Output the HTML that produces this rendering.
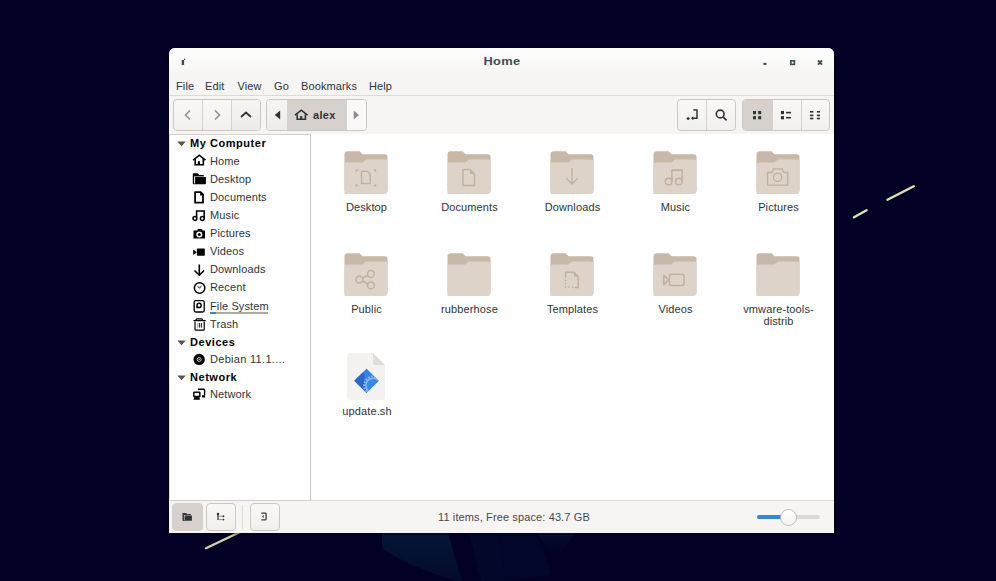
<!DOCTYPE html>
<html><head><meta charset="utf-8">
<style>
*{box-sizing:border-box;margin:0;padding:0}
html,body{width:996px;height:581px;overflow:hidden;background:#020024;font-family:"Liberation Sans",sans-serif;position:relative}
.a{position:absolute;display:block}
.t{position:absolute;font-size:11px;line-height:12px;white-space:nowrap;color:#2e3436;letter-spacing:0.12px}
.grp{position:absolute;border:1px solid #cdc7c2;border-radius:4px;background:linear-gradient(#f9f8f7,#f2f0ef);overflow:hidden}
.dv{position:absolute;top:0;bottom:0;width:1px;background:#d6d1cc}
.act{position:absolute;top:0;bottom:0;background:#d6d1cd}
</style></head><body>

<svg class="a" style="left:0;top:0" width="996" height="581">
  <defs>
   <linearGradient id="g1" x1="0" y1="0" x2="0" y2="1"><stop offset="0" stop-color="#072546"/><stop offset="1" stop-color="#03102f"/></linearGradient>
   <linearGradient id="g2" x1="0" y1="0" x2="0" y2="1"><stop offset="0" stop-color="#061a3a"/><stop offset="1" stop-color="#020024" stop-opacity="0"/></linearGradient>
  </defs>
  <path d="M382 533 H448 L462 581 H456 Q405 565 382 548 Z" fill="url(#g1)" opacity="0.6"/>
  <path d="M469 533 H497 L506 581 H481 Z" fill="#041236" opacity="0.45"/>
  <path d="M497 533 H537 L552 575 L506 581 Z" fill="#03113a" opacity="0.35"/>
  <path d="M537 533 H575 L555 560 Z" fill="url(#g2)" opacity="0.7"/>
  <line x1="854" y1="217.3" x2="866.6" y2="210.2" stroke="#e2e0b0" stroke-width="2.4" stroke-linecap="round"/>
  <line x1="887.5" y1="199.8" x2="913.8" y2="186.2" stroke="#e2e0b0" stroke-width="2.4" stroke-linecap="round"/>
  <line x1="206" y1="548.3" x2="240" y2="532" stroke="#d4d2a4" stroke-width="2.3" stroke-linecap="round"/>
</svg>
<div class="a" style="left:169px;top:48px;width:665px;height:485px;background:#f6f5f4;border-radius:6px 6px 0 0;box-shadow:0 1px 3px rgba(0,0,0,0.6)"></div>
<div class="a" style="left:169px;top:48px;width:665px;height:25px;border-radius:6px 6px 0 0;background:linear-gradient(#fdfdfd,#f8f8f7 80%,#f6f5f4)"></div>
<svg class="a" style="left:180px;top:57px;" width="8" height="9" viewBox="0 0 8 9"><rect x="1.7" y="3" width="2.4" height="5" fill="#3b4d55"/><circle cx="4.6" cy="2.3" r="0.8" fill="#3b4d55"/></svg>
<div class="t" style="left:462px;top:55px;width:80px;text-align:center;font-weight:bold;font-size:11.3px;color:#3d4b53;letter-spacing:0.3px;transform:scaleX(1.14)">Home</div>
<svg class="a" style="left:760px;top:57px;" width="66" height="10" viewBox="0 0 66 10"><rect x="3.4" y="5.9" width="3.1" height="2" fill="#3b4d55"/><rect x="30.8" y="3.8" width="3.6" height="3.6" fill="none" stroke="#3b4d55" stroke-width="1.6"/><path d="M58 3.4 L62 7.6 M62 3.4 L58 7.6" stroke="#3b4d55" stroke-width="1.9"/></svg>
<div class="t" style="left:176px;top:79.5px;font-weight:normal;font-size:11px;color:#2e3436;">File</div>
<div class="t" style="left:205px;top:79.5px;font-weight:normal;font-size:11px;color:#2e3436;">Edit</div>
<div class="t" style="left:237.5px;top:79.5px;font-weight:normal;font-size:11px;color:#2e3436;">View</div>
<div class="t" style="left:274px;top:79.5px;font-weight:normal;font-size:11px;color:#2e3436;">Go</div>
<div class="t" style="left:301px;top:79.5px;font-weight:normal;font-size:11px;color:#2e3436;">Bookmarks</div>
<div class="t" style="left:369px;top:79.5px;font-weight:normal;font-size:11px;color:#2e3436;">Help</div>
<div class="a" style="left:169px;top:95px;width:665px;height:1px;background:#dedad6"></div>
<div class="grp" style="left:173px;top:99px;width:88px;height:32px;"><div class="dv" style="left:28px"></div><div class="dv" style="left:57px"></div><div class="a" style="left:58px;top:0;width:29px;height:30px;background:linear-gradient(#f6f5f4,#edebe9)"></div></div>
<svg class="a" style="left:182px;top:108px;" width="12" height="14" viewBox="0 0 12 14"><path d="M8 2.5 L3.5 7 L8 11.5" fill="none" stroke="#8b8e8f" stroke-width="1.5"/></svg>
<svg class="a" style="left:211px;top:108px;" width="12" height="14" viewBox="0 0 12 14"><path d="M4 2.5 L8.5 7 L4 11.5" fill="none" stroke="#8b8e8f" stroke-width="1.5"/></svg>
<svg class="a" style="left:239px;top:108px;" width="14" height="12" viewBox="0 0 14 12"><path d="M2 9 L7 4.5 L12 9" fill="none" stroke="#2e3436" stroke-width="1.7"/></svg>
<div class="grp" style="left:266px;top:99px;width:101px;height:32px;"><div class="a" style="left:0;top:0;width:20px;height:30px;background:linear-gradient(#f6f5f4,#eeecea)"></div><div class="act" style="left:20px;width:60px"></div><div class="a" style="left:80px;top:0;width:19px;height:30px;background:#faf9f8"></div></div>
<svg class="a" style="left:272px;top:108px;" width="10" height="14" viewBox="0 0 10 14"><path d="M8.2 2.4 L2.8 7 L8.2 11.6 Z" fill="#2e3436"/></svg>
<svg class="a" style="left:352px;top:108px;" width="10" height="14" viewBox="0 0 10 14"><path d="M1.7 2.4 L7 7 L1.7 11.6 Z" fill="#8b8e8f"/></svg>
<svg class="a" style="left:293px;top:108px;" width="16" height="13" viewBox="0 0 16 13"><path d="M2 7.1 L8.3 2.2 L14.6 7.1" fill="none" stroke="#2e3436" stroke-width="1.6" stroke-linejoin="miter"/><path d="M4.2 6.2 V11.2 H12.4 V6.2" fill="none" stroke="#2e3436" stroke-width="1.6"/><rect x="7.1" y="8.1" width="2.2" height="3.3" fill="#2e3436"/></svg>
<div class="t" style="left:313px;top:109px;font-weight:bold;font-size:11px;color:#2e3436;letter-spacing:0.3px">alex</div>
<div class="grp" style="left:677px;top:99px;width:59px;height:32px;"><div class="dv" style="left:28px"></div></div>
<svg class="a" style="left:684px;top:107px;" width="16" height="16" viewBox="0 0 16 16"><circle cx="4.1" cy="11.6" r="1.45" fill="#2e3436"/><path d="M9.3 3 H13 V11.3 H8.5" fill="none" stroke="#2e3436" stroke-width="1.5"/><path d="M6.8 11.3 L9.3 9.3 V13.3 Z" fill="#2e3436"/></svg>
<svg class="a" style="left:713px;top:107px;" width="16" height="16" viewBox="0 0 16 16"><circle cx="7.2" cy="7" r="3.9" fill="none" stroke="#2e3436" stroke-width="1.6"/><path d="M10 9.8 L13.6 13.3" stroke="#2e3436" stroke-width="1.7"/></svg>
<div class="grp" style="left:742px;top:99px;width:88px;height:32px;"><div class="act" style="left:0;width:29px"></div><div class="dv" style="left:29px"></div><div class="dv" style="left:58px"></div></div>
<svg class="a" style="left:750px;top:107px;" width="16" height="16" viewBox="0 0 16 16"><g fill="#2e3436"><rect x="3" y="4" width="3" height="3.2"/><rect x="8.2" y="4" width="3" height="3.2"/><rect x="3" y="9.1" width="3" height="3.2"/><rect x="8.2" y="9.1" width="3" height="3.2"/></g></svg>
<svg class="a" style="left:778px;top:107px;" width="16" height="16" viewBox="0 0 16 16"><g fill="#2e3436"><rect x="2.9" y="4" width="3.1" height="3.2"/><rect x="2.9" y="9.1" width="3.1" height="3.2"/><rect x="8" y="4.8" width="5" height="1.6"/><rect x="8" y="9.9" width="5" height="1.6"/></g></svg>
<svg class="a" style="left:807px;top:107px;" width="16" height="16" viewBox="0 0 16 16"><g fill="#2e3436"><rect x="2.9" y="4" width="3.5" height="1.6"/><rect x="9.9" y="4" width="3.1" height="1.6"/><rect x="2.9" y="7.6" width="3.5" height="1.6"/><rect x="9.9" y="7.6" width="3.1" height="1.6"/><rect x="2.9" y="10.7" width="3.5" height="1.6"/><rect x="9.9" y="10.7" width="3.1" height="1.6"/></g></svg>
<div class="a" style="left:169px;top:134px;width:142px;height:367px;background:#fff;border-left:1px solid #e2ddd9;border-top:1px solid #d5d0cc;border-right:1px solid #c9c3bd;border-bottom:1px solid #d5d0cc"></div>
<div class="a" style="left:311px;top:134px;width:523px;height:367px;background:#fff;border-bottom:1px solid #dedad6"></div>
<svg class="a" style="left:176.5px;top:140.5px;" width="10" height="6" viewBox="0 0 10 6"><path d="M0.3 0.6 H8.8 L4.55 5.3 Z" fill="#555753"/></svg>
<div class="t" style="left:190px;top:136.5px;font-weight:bold;font-size:11px;color:#000;letter-spacing:0.55px">My Computer</div>
<svg class="a" style="left:176.5px;top:339.5px;" width="10" height="6" viewBox="0 0 10 6"><path d="M0.3 0.6 H8.8 L4.55 5.3 Z" fill="#555753"/></svg>
<div class="t" style="left:190px;top:335.5px;font-weight:bold;font-size:11px;color:#000;letter-spacing:0.55px">Devices</div>
<svg class="a" style="left:176.5px;top:374.5px;" width="10" height="6" viewBox="0 0 10 6"><path d="M0.3 0.6 H8.8 L4.55 5.3 Z" fill="#555753"/></svg>
<div class="t" style="left:190px;top:370.5px;font-weight:bold;font-size:11px;color:#000;letter-spacing:0.55px">Network</div>
<div class="t" style="left:210px;top:154.5px;font-weight:normal;font-size:11px;color:#2e3436;">Home</div>
<div class="t" style="left:210px;top:172.5px;font-weight:normal;font-size:11px;color:#2e3436;">Desktop</div>
<div class="t" style="left:210px;top:190.5px;font-weight:normal;font-size:11px;color:#2e3436;">Documents</div>
<div class="t" style="left:210px;top:208.5px;font-weight:normal;font-size:11px;color:#2e3436;">Music</div>
<div class="t" style="left:210px;top:226.5px;font-weight:normal;font-size:11px;color:#2e3436;">Pictures</div>
<div class="t" style="left:210px;top:245px;font-weight:normal;font-size:11px;color:#2e3436;">Videos</div>
<div class="t" style="left:210px;top:263px;font-weight:normal;font-size:11px;color:#2e3436;">Downloads</div>
<div class="t" style="left:210px;top:281px;font-weight:normal;font-size:11px;color:#2e3436;">Recent</div>
<div class="t" style="left:210px;top:299.5px;font-weight:normal;font-size:11px;color:#2e3436;">File System</div>
<div class="t" style="left:210px;top:317.5px;font-weight:normal;font-size:11px;color:#2e3436;">Trash</div>
<div class="t" style="left:210px;top:353px;font-weight:normal;font-size:11px;color:#2e3436;letter-spacing:0.3px">Debian 11.1....</div>
<div class="t" style="left:210px;top:387.5px;font-weight:normal;font-size:11px;color:#2e3436;">Network</div>
<div class="a" style="left:210px;top:312px;width:58px;height:2px;background:#b0a9a2"></div>
<div class="a" style="left:210px;top:312px;width:6px;height:2px;background:#3584e4"></div>
<svg class="a" style="left:191px;top:152px;" width="16" height="16" viewBox="0 0 16 16"><path d="M2.2 8.1 L8.3 3.2 L14.4 8.1" fill="none" stroke="#000" stroke-width="1.6"/><path d="M4.2 6.8 V12.7 H12.3 V6.8" fill="none" stroke="#000" stroke-width="1.6"/><path d="M6.8 13 V10 Q6.8 9.1 7.9 9.1 Q9 9.1 9 10 V13 Z" fill="#000"/></svg>
<svg class="a" style="left:191px;top:170px;" width="16" height="16" viewBox="0 0 16 16"><path d="M1.8 3.9 Q1.8 3.2 2.5 3.2 H6.6 L8.4 5.1 H12.7 V6.2 H3.1 V14.3 H2.5 Q1.8 14.3 1.8 13.6 Z" fill="#000"/><path d="M4.1 7.1 H14.9 V13.6 Q14.9 14.3 14.2 14.3 H3 V13.4 H4.1 Z" fill="#000"/><path d="M3.3 6.6 H12.7" stroke="#777" stroke-width="0.8"/></svg>
<svg class="a" style="left:191px;top:189px;" width="16" height="16" viewBox="0 0 16 16"><path d="M4.1 3.2 H9.7 L12 5.5 V13.7 H4.1 Z" fill="none" stroke="#000" stroke-width="1.8" stroke-linejoin="round"/><path d="M9.1 3 V6.6 H12.2 Z" fill="#000"/></svg>
<svg class="a" style="left:191px;top:208px;" width="16" height="16" viewBox="0 0 16 16"><path d="M5.6 10.2 V3 H13.2 V10.2" fill="none" stroke="#000" stroke-width="1.5"/><circle cx="3.9" cy="10.5" r="1.9" fill="none" stroke="#000" stroke-width="1.5"/><circle cx="11.3" cy="10.5" r="1.9" fill="none" stroke="#000" stroke-width="1.5"/></svg>
<svg class="a" style="left:191px;top:226px;" width="16" height="16" viewBox="0 0 16 16"><path d="M2.5 4.4 H6.2 L7 2.9 H10.8 L11.6 4.4 H14 V12.6 H2.5 Z" fill="#000"/><circle cx="8.3" cy="8.4" r="3" fill="#fff"/><circle cx="8.3" cy="8.4" r="1.5" fill="#000"/></svg>
<svg class="a" style="left:191px;top:242px;" width="16" height="16" viewBox="0 0 16 16"><path d="M2.2 7.4 L5.8 10.15 L2.2 12.9 Z" fill="#000"/><rect x="5.9" y="6.6" width="7.9" height="7.2" rx="0.8" fill="#000"/></svg>
<svg class="a" style="left:191px;top:262px;" width="16" height="16" viewBox="0 0 16 16"><path d="M8.3 2.5 V13" stroke="#000" stroke-width="1.6"/><path d="M3.5 8.5 L8.3 13.2 L13.1 8.5" fill="none" stroke="#000" stroke-width="1.6"/></svg>
<svg class="a" style="left:191px;top:280px;" width="16" height="16" viewBox="0 0 16 16"><circle cx="8.6" cy="8" r="5.25" fill="none" stroke="#000" stroke-width="1.5"/><path d="M6.5 6.4 L8.5 7.9 L10.6 6" fill="none" stroke="#000" stroke-width="1"/></svg>
<svg class="a" style="left:191px;top:298px;" width="16" height="16" viewBox="0 0 16 16"><rect x="3.2" y="2.7" width="10" height="11.3" rx="1.5" fill="none" stroke="#000" stroke-width="1.3"/><path d="M5.3 7.4 A2.8 2.8 0 1 1 8.1 10.2 H5.3 Z" fill="#000"/><circle cx="8.1" cy="7.4" r="1.35" fill="#fff"/></svg>
<svg class="a" style="left:191px;top:316px;" width="16" height="16" viewBox="0 0 16 16"><path d="M2.5 4.6 H14.7" stroke="#000" stroke-width="1.2"/><path d="M4.6 4.4 L5.7 2.8 H10.8 L11.9 4.4" fill="none" stroke="#000" stroke-width="1.2" stroke-linejoin="round"/><path d="M4 5.5 V13.2 Q4 14.1 4.9 14.1 H12.3 Q13.2 14.1 13.2 13.2 V5.5" fill="none" stroke="#000" stroke-width="1.2"/><path d="M8.6 7 V11.6 M10.4 7 V11.6" stroke="#000" stroke-width="0.9"/><path d="M6.8 7 V11.6" stroke="#777" stroke-width="0.9"/></svg>
<svg class="a" style="left:191px;top:351px;" width="16" height="16" viewBox="0 0 16 16"><circle cx="8.15" cy="8.4" r="5.65" fill="#000"/><circle cx="8.2" cy="8.5" r="2" fill="none" stroke="#c8c8c8" stroke-width="1"/><circle cx="8.2" cy="8.5" r="0.7" fill="#ddd"/></svg>
<svg class="a" style="left:191px;top:386px;" width="16" height="16" viewBox="0 0 16 16"><path d="M6.9 3.3 H12.8 Q13.6 3.3 13.6 4.1 V9.6" fill="none" stroke="#000" stroke-width="1.4"/><path d="M11 9.2 H13.9 L14.2 11.4 H10.8 Z" fill="#000"/><rect x="2.1" y="5.4" width="7.5" height="6" rx="1.3" fill="#000"/><rect x="3.5" y="6.9" width="4.6" height="2.9" fill="#fff"/><path d="M3.2 11.2 H8.4 L8.9 13.8 H2.6 Z" fill="#000"/></svg>
<svg class="a" style="left:344px;top:150.5px;" width="44" height="43" viewBox="0 0 44 43"><path d="M0.5 3.5 Q0.5 0.2 3.8 0.2 H15.5 L18.5 3.2 H40.7 Q43.5 3.2 43.5 6 V40 H0.5 Z" fill="#c8b8a8"/><path d="M0.5 13.5 Q0.5 11.6 2.4 11.6 H18.5 L21.8 8.4 H41 Q43.5 8.4 43.5 10.9 V40.6 Q43.5 43 41.1 43 H0.5 Z" fill="#ddd3c9"/><g fill="none" stroke="#c2b09f" stroke-width="1.4"><path d="M17.5 20.3 H23.3 L26.3 23.3 V32.5 H17.5 Z" stroke-linejoin="round"/></g><g fill="#c2b09f"><path d="M11.6 18.6 H14.6 L11.6 21.6 Z"/><path d="M32.2 18.6 V21.6 L29.2 18.6 Z"/><path d="M11.6 35.2 V32.2 L14.6 35.2 Z"/><path d="M32.2 35.2 H29.2 L32.2 32.2 Z"/></g></svg>
<svg class="a" style="left:447px;top:150.5px;" width="44" height="43" viewBox="0 0 44 43"><path d="M0.5 3.5 Q0.5 0.2 3.8 0.2 H15.5 L18.5 3.2 H40.7 Q43.5 3.2 43.5 6 V40 H0.5 Z" fill="#c8b8a8"/><path d="M0.5 13.5 Q0.5 11.6 2.4 11.6 H18.5 L21.8 8.4 H41 Q43.5 8.4 43.5 10.9 V40.6 Q43.5 43 41.1 43 H0.5 Z" fill="#ddd3c9"/><path d="M16 18.5 H23 L27.5 23 V34.5 H16 Z" fill="none" stroke="#c2b09f" stroke-width="1.4" stroke-linejoin="round"/><path d="M23 18.5 L27.5 23 H23 Z" fill="#c2b09f"/></svg>
<svg class="a" style="left:550px;top:150.5px;" width="44" height="43" viewBox="0 0 44 43"><path d="M0.5 3.5 Q0.5 0.2 3.8 0.2 H15.5 L18.5 3.2 H40.7 Q43.5 3.2 43.5 6 V40 H0.5 Z" fill="#c8b8a8"/><path d="M0.5 13.5 Q0.5 11.6 2.4 11.6 H18.5 L21.8 8.4 H41 Q43.5 8.4 43.5 10.9 V40.6 Q43.5 43 41.1 43 H0.5 Z" fill="#ddd3c9"/><g fill="none" stroke="#c2b09f" stroke-width="1.4"><path d="M22 17 V33"/><path d="M16 27 L22 33 L28 27"/></g></svg>
<svg class="a" style="left:653px;top:150.5px;" width="44" height="43" viewBox="0 0 44 43"><path d="M0.5 3.5 Q0.5 0.2 3.8 0.2 H15.5 L18.5 3.2 H40.7 Q43.5 3.2 43.5 6 V40 H0.5 Z" fill="#c8b8a8"/><path d="M0.5 13.5 Q0.5 11.6 2.4 11.6 H18.5 L21.8 8.4 H41 Q43.5 8.4 43.5 10.9 V40.6 Q43.5 43 41.1 43 H0.5 Z" fill="#ddd3c9"/><g fill="none" stroke="#c2b09f" stroke-width="1.4"><path d="M18.9 30.5 V19.3 H29.1 V30.5"/><path d="M18.9 19.3 H29.1" stroke-width="1.7"/><circle cx="15.6" cy="30.6" r="3.3"/><circle cx="25.8" cy="30.6" r="3.3"/></g></svg>
<svg class="a" style="left:756px;top:150.5px;" width="44" height="43" viewBox="0 0 44 43"><path d="M0.5 3.5 Q0.5 0.2 3.8 0.2 H15.5 L18.5 3.2 H40.7 Q43.5 3.2 43.5 6 V40 H0.5 Z" fill="#c8b8a8"/><path d="M0.5 13.5 Q0.5 11.6 2.4 11.6 H18.5 L21.8 8.4 H41 Q43.5 8.4 43.5 10.9 V40.6 Q43.5 43 41.1 43 H0.5 Z" fill="#ddd3c9"/><g fill="none" stroke="#c2b09f" stroke-width="1.4"><path d="M11.6 21.5 H15.8 L17.6 17.9 H26.1 L27.9 21.5 H31.8 V34.1 H11.6 Z" stroke-linejoin="round"/><circle cx="21.6" cy="26.3" r="4.2"/></g></svg>
<svg class="a" style="left:344px;top:252.5px;" width="44" height="43" viewBox="0 0 44 43"><path d="M0.5 3.5 Q0.5 0.2 3.8 0.2 H15.5 L18.5 3.2 H40.7 Q43.5 3.2 43.5 6 V40 H0.5 Z" fill="#c8b8a8"/><path d="M0.5 13.5 Q0.5 11.6 2.4 11.6 H18.5 L21.8 8.4 H41 Q43.5 8.4 43.5 10.9 V40.6 Q43.5 43 41.1 43 H0.5 Z" fill="#ddd3c9"/><g fill="none" stroke="#c2b09f" stroke-width="1.5"><circle cx="15.4" cy="26.5" r="3.4"/><circle cx="26.9" cy="21" r="3.4"/><circle cx="26.9" cy="32.4" r="3.4"/><path d="M18.4 25 L23.9 22.4 M18.4 28 L23.9 31"/></g></svg>
<svg class="a" style="left:447px;top:252.5px;" width="44" height="43" viewBox="0 0 44 43"><path d="M0.5 3.5 Q0.5 0.2 3.8 0.2 H15.5 L18.5 3.2 H40.7 Q43.5 3.2 43.5 6 V40 H0.5 Z" fill="#c8b8a8"/><path d="M0.5 13.5 Q0.5 11.6 2.4 11.6 H18.5 L21.8 8.4 H41 Q43.5 8.4 43.5 10.9 V40.6 Q43.5 43 41.1 43 H0.5 Z" fill="#ddd3c9"/></svg>
<svg class="a" style="left:550px;top:252.5px;" width="44" height="43" viewBox="0 0 44 43"><path d="M0.5 3.5 Q0.5 0.2 3.8 0.2 H15.5 L18.5 3.2 H40.7 Q43.5 3.2 43.5 6 V40 H0.5 Z" fill="#c8b8a8"/><path d="M0.5 13.5 Q0.5 11.6 2.4 11.6 H18.5 L21.8 8.4 H41 Q43.5 8.4 43.5 10.9 V40.6 Q43.5 43 41.1 43 H0.5 Z" fill="#ddd3c9"/><g fill="none" stroke="#c2b09f" stroke-width="1.5"><path d="M15.6 25 V19.2 H24 L28.2 23.4 V34.5 H24.5"/></g><path d="M24 19.2 L28.2 23.4 H24 Z" fill="#c2b09f"/><g fill="#c2b09f"><rect x="14.9" y="26.8" width="1.5" height="1.5"/><rect x="14.9" y="30" width="1.5" height="1.5"/><rect x="14.9" y="33.3" width="1.5" height="1.5"/><rect x="18.3" y="33.3" width="1.5" height="1.5"/><rect x="21.7" y="33.3" width="1.5" height="1.5"/></g></svg>
<svg class="a" style="left:653px;top:252.5px;" width="44" height="43" viewBox="0 0 44 43"><path d="M0.5 3.5 Q0.5 0.2 3.8 0.2 H15.5 L18.5 3.2 H40.7 Q43.5 3.2 43.5 6 V40 H0.5 Z" fill="#c8b8a8"/><path d="M0.5 13.5 Q0.5 11.6 2.4 11.6 H18.5 L21.8 8.4 H41 Q43.5 8.4 43.5 10.9 V40.6 Q43.5 43 41.1 43 H0.5 Z" fill="#ddd3c9"/><g fill="none" stroke="#c2b09f" stroke-width="1.5"><rect x="16.4" y="21.2" width="14.6" height="11.4" rx="2"/><path d="M10.8 22.2 L15.6 26.9 L10.8 31.6 Z" stroke-linejoin="round"/></g></svg>
<svg class="a" style="left:756px;top:252.5px;" width="44" height="43" viewBox="0 0 44 43"><path d="M0.5 3.5 Q0.5 0.2 3.8 0.2 H15.5 L18.5 3.2 H40.7 Q43.5 3.2 43.5 6 V40 H0.5 Z" fill="#c8b8a8"/><path d="M0.5 13.5 Q0.5 11.6 2.4 11.6 H18.5 L21.8 8.4 H41 Q43.5 8.4 43.5 10.9 V40.6 Q43.5 43 41.1 43 H0.5 Z" fill="#ddd3c9"/></svg>
<div class="t" style="left:306.5px;top:201px;width:120px;text-align:center;color:#2e3436;">Desktop</div>
<div class="t" style="left:306.5px;top:303px;width:120px;text-align:center;color:#2e3436;">Public</div>
<div class="t" style="left:409.5px;top:201px;width:120px;text-align:center;color:#2e3436;">Documents</div>
<div class="t" style="left:409.5px;top:303px;width:120px;text-align:center;color:#2e3436;">rubberhose</div>
<div class="t" style="left:512.5px;top:201px;width:120px;text-align:center;color:#2e3436;">Downloads</div>
<div class="t" style="left:512.5px;top:303px;width:120px;text-align:center;color:#2e3436;">Templates</div>
<div class="t" style="left:615.5px;top:201px;width:120px;text-align:center;color:#2e3436;">Music</div>
<div class="t" style="left:615.5px;top:303px;width:120px;text-align:center;color:#2e3436;">Videos</div>
<div class="t" style="left:718.5px;top:201px;width:120px;text-align:center;color:#2e3436;">Pictures</div>
<div class="t" style="left:718.5px;top:303px;width:120px;text-align:center;color:#2e3436;">vmware-tools-</div>
<div class="t" style="left:718.5px;top:315px;width:120px;text-align:center;color:#2e3436;">distrib</div>
<svg class="a" style="left:347px;top:353px;" width="38" height="47" viewBox="0 0 38 47"><defs><clipPath id="dm"><path d="M19.5 15.8 Q19.5 15.6 19.7 15.8 L31.5 27.6 Q31.7 27.8 31.5 28 L19.7 39.8 Q19.5 40 19.3 39.8 L7.5 28 Q7.3 27.8 7.5 27.6 Z"/></clipPath></defs><path d="M3 0 H26 L38 12 V44 Q38 47 35 47 H3 Q0 47 0 44 V3 Q0 0 3 0 Z" fill="#f3f2f1"/><path d="M26 0 L38 12 H29 Q26 12 26 9 Z" fill="#deddda"/><g clip-path="url(#dm)"><rect x="0" y="10" width="38" height="35" fill="#3584e4"/><path d="M5 28 L15.3 17.5 L17.9 23 L17.2 26.5 L17.4 30.5 L18.4 35 L20 39 L19.5 42 Z" fill="#2769c9"/><circle cx="26.3" cy="32.6" r="9.1" fill="none" stroke="#8cb8ee" stroke-width="2.2" stroke-dasharray="1.7 1.4"/><circle cx="26.3" cy="32.6" r="8.2" fill="#8cb8ee"/><circle cx="26.3" cy="32.6" r="6.7" fill="#3a88e6"/></g></svg>
<div class="t" style="left:307px;top:404.5px;width:120px;text-align:center;color:#2e3436;">update.sh</div>
<div class="grp" style="left:172px;top:503px;width:31px;height:28px;border-color:#d6d1cd;background:#d6d1cd"></div>
<div class="grp" style="left:206px;top:503px;width:30px;height:28px;"></div>
<div class="a" style="left:242px;top:505px;width:1px;height:24px;background:#dcd8d4"></div>
<div class="grp" style="left:250px;top:503px;width:30px;height:28px;"></div>
<svg class="a" style="left:178px;top:508px;" width="16" height="16" viewBox="0 0 16 16"><g fill="#2e3436"><path d="M4.5 5 H8 L9 6 H12.7 V7 H5.9 V12.7 H4.5 Z"/><path d="M6.6 7.4 H13.9 V12.7 H5 V12 H6.6 Z"/></g></svg>
<svg class="a" style="left:210px;top:508px;" width="16" height="16" viewBox="0 0 16 16"><g fill="#2e3436"><circle cx="8" cy="5.9" r="1.25"/><circle cx="13.4" cy="8.3" r="0.95"/><circle cx="13.4" cy="11.6" r="0.95"/></g><path d="M8 6 V12" stroke="#2e3436" stroke-width="1.3"/><path d="M8.5 8.3 H13 M8.5 11.6 H13" stroke="#7a7e80" stroke-width="0.8"/></svg>
<svg class="a" style="left:254px;top:508px;" width="16" height="16" viewBox="0 0 16 16"><path d="M7.3 5.2 H11.4 Q12.1 5.2 12.1 5.9 V11.1 Q12.1 11.8 11.4 11.8 H7.3" fill="none" stroke="#3a3f41" stroke-width="1.3"/><path d="M7.9 8.5 L9.7 7.1 V9.9 Z" fill="#3a3f41"/></svg>
<div class="t" style="left:438px;top:511px;font-weight:normal;font-size:11px;color:#48494a;">11 items, Free space: 43.7 GB</div>
<div class="a" style="left:757px;top:515px;width:63px;height:4px;border-radius:2px;background:#dcd8d4"></div>
<div class="a" style="left:757px;top:515px;width:30px;height:4px;border-radius:2px;background:#3584e4"></div>
<div class="a" style="left:780px;top:509px;width:17px;height:17px;border-radius:50%;background:linear-gradient(#ffffff,#f4f3f2);border:1px solid #c3bcb6"></div>
</body></html>
